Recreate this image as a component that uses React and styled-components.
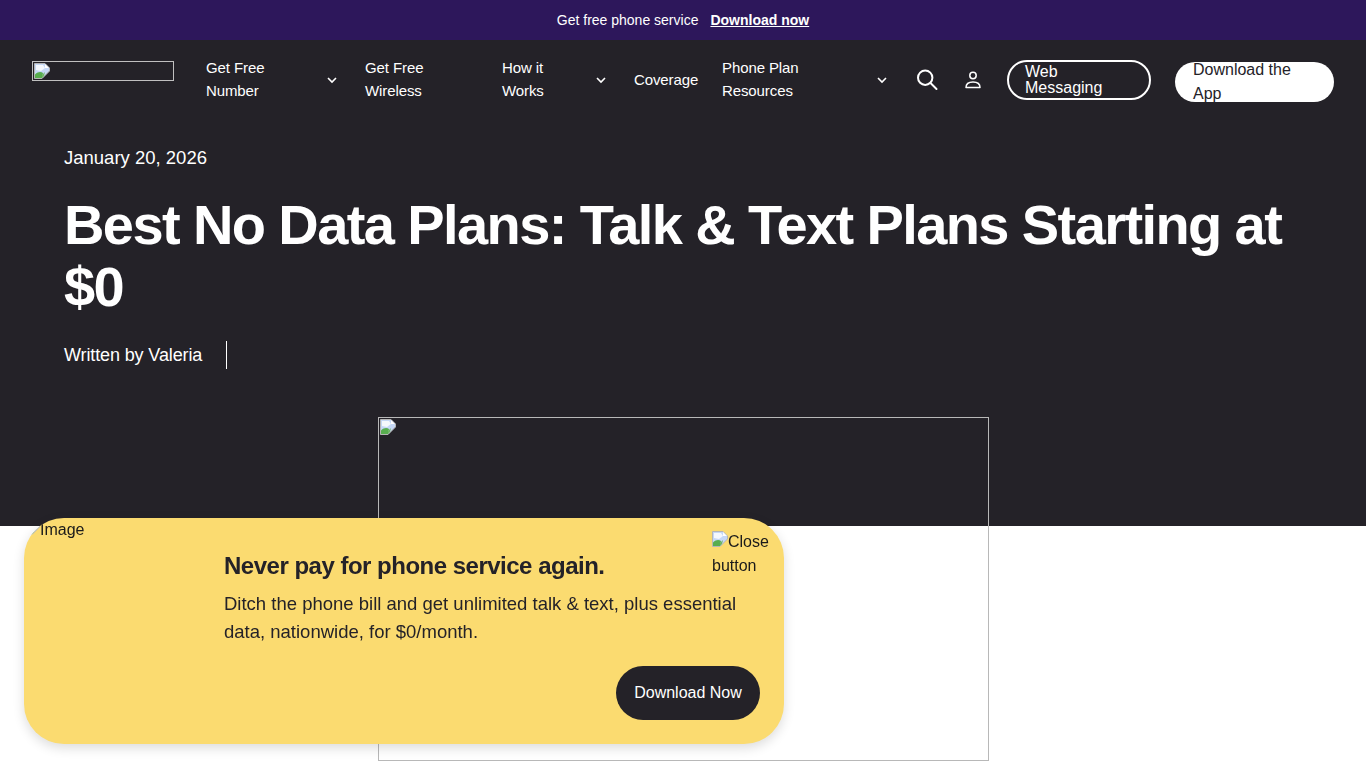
import React from 'react';
import styled, { createGlobalStyle } from 'styled-components';

const GlobalStyle = createGlobalStyle`
  body {
    margin: 0;
    background: #ffffff;
    font-family: "Liberation Sans", Arial, sans-serif;
    color: #242228;
  }
`;

const PromoBar = styled.div`
  display: flex;
  justify-content: center;
  align-items: center;
  gap: 12px;
  height: 40px;
  background: #2d175b;
  color: #ffffff;
  font-size: 14px;
`;

const PromoLink = styled.a`
  color: #ffffff;
  font-weight: 700;
  text-decoration: underline;
`;

const Nav = styled.nav`
  display: flex;
  align-items: center;
  height: 80px;
  padding: 0 32px;
  background: #242228;
  color: #ffffff;
  font-size: 15px;
  line-height: 23px;
  letter-spacing: -0.1px;
`;

const Logo = styled.div`
  box-sizing: border-box;
  flex: none;
  width: 142px;
  height: 20px;
  margin: -18px 32px 0 0;
  padding: 1px;
  border: 1px solid #c0c0c0;
  overflow: hidden;
  line-height: 0;
`;

const NavItem = styled.a`
  box-sizing: border-box;
  display: flex;
  flex: none;
  align-items: center;
  justify-content: space-between;
  width: ${(p) => p.$width}px;
  margin-right: 24px;
  padding-right: ${(p) => (p.$chevron ? 3 : 0)}px;
`;

const NavLabel = styled.span`
  display: block;
  width: ${(p) => p.$width || 'auto'};
  margin-top: -2px;
`;

const IconSlot = styled.span`
  display: flex;
  flex: none;
  justify-content: center;
  width: ${(p) => p.$width}px;
  margin-right: ${(p) => p.$gap}px;
`;

const WebButton = styled.a`
  box-sizing: border-box;
  flex: none;
  display: flex;
  align-items: center;
  width: 144px;
  height: 40px;
  margin-right: 24px;
  padding: 0 16px;
  border: 2px solid #ffffff;
  border-radius: 20px;
  font-size: 16px;
  line-height: 16px;
  letter-spacing: 0;
`;

const AppButton = styled.a`
  box-sizing: border-box;
  flex: none;
  display: flex;
  align-items: center;
  width: 159px;
  height: 40px;
  margin-top: 4px;
  padding: 0 18px;
  overflow: hidden;
  border-radius: 20px;
  background: #ffffff;
  color: #242228;
  font-size: 16px;
  line-height: 24px;
  letter-spacing: 0;
`;

const Hero = styled.header`
  box-sizing: border-box;
  height: 406px;
  padding: 24px 64px 0;
  background: #242228;
  color: #ffffff;
`;

const DateLine = styled.div`
  font-size: 18.5px;
  line-height: 28px;
`;

const Title = styled.h1`
  margin: 22px 0 0;
  font-size: 56px;
  line-height: 62px;
  font-weight: 700;
  letter-spacing: -1.6px;
`;

const Byline = styled.div`
  display: flex;
  align-items: center;
  height: 28px;
  margin-top: 23px;
  font-size: 18px;
  letter-spacing: -0.12px;
`;

const Divider = styled.span`
  width: 1px;
  height: 28px;
  margin-left: 24px;
  background: #ffffff;
`;

const FeatureImage = styled.div`
  box-sizing: border-box;
  width: 611px;
  height: 344px;
  margin: -109px auto 0;
  padding: 1px;
  border: 1px solid #b8b8b8;
  line-height: 0;
`;

const Popup = styled.aside`
  position: fixed;
  left: 24px;
  top: 518px;
  display: flex;
  box-sizing: border-box;
  width: 760px;
  height: 226px;
  border-radius: 40px;
  overflow: hidden;
  background: #fbdb70;
  box-shadow: 0 4px 12px rgba(0, 0, 0, 0.14);
`;

const PopupMedia = styled.div`
  flex: none;
  width: 200px;
  color: #1a1a1a;
  font-size: 16px;
  line-height: 24px;
`;

const PopupBody = styled.div`
  position: relative;
  flex: 1;
  padding: 32px 24px 24px 0;
`;

const PopupTitle = styled.h2`
  margin: 0;
  font-size: 24px;
  line-height: 32px;
  font-weight: 700;
  letter-spacing: -0.5px;
  color: #242228;
`;

const PopupText = styled.p`
  margin: 8px 0 0;
  font-size: 18.5px;
  line-height: 28px;
  color: #242228;
`;

const CloseAlt = styled.div`
  position: absolute;
  top: 12px;
  right: 12px;
  width: 60px;
  color: #1a1a1a;
  font-size: 16px;
  line-height: 24px;
`;

const DownloadButton = styled.a`
  position: absolute;
  right: 24px;
  bottom: 24px;
  display: flex;
  align-items: center;
  justify-content: center;
  width: 144px;
  height: 54px;
  border-radius: 27px;
  background: #242228;
  color: #ffffff;
  font-size: 16px;
`;

const BrokenImage = () => (
  <svg width="16" height="16" viewBox="0 0 16 16">
    <path d="M0.500 0.500H11L15.500 5V8L8 15.500H0.500z" fill="#c6d8f6" stroke="#b5b5b5" strokeWidth="1" />
    <path d="M2 2h7l2 3-4 3-5-1z" fill="#f5f8fd" />
    <path d="M1 15v-3.500c3-3 6-3 8-1.500l-1 5z" fill="#58ad4f" />
    <path d="M8 12l3-3-1 4-2 2z" fill="#6fb564" />
    <path d="M11 1v4h4z" fill="#ffffff" />
  </svg>
);

const Chevron = () => (
  <svg width="12" height="12" viewBox="0 0 12 12" fill="none" stroke="#ffffff" strokeWidth="1.6">
    <path d="M2 4l4 4 4-4" />
  </svg>
);

const SearchIcon = () => (
  <svg width="22" height="22" viewBox="0 0 22 22" fill="none" stroke="#ffffff" strokeWidth="2">
    <circle cx="9.200" cy="8.700" r="7.200" />
    <path d="M14.500 14l6 6" strokeLinecap="round" />
  </svg>
);

const UserIcon = () => (
  <svg width="16" height="18" viewBox="0 0 16 18" fill="none" stroke="#ffffff" strokeWidth="1.500">
    <circle cx="8" cy="4.500" r="3.200" />
    <path d="M1 16.500c0-4 2.500-5.500 7-5.500s7 1.500 7 5.500z" strokeLinejoin="round" />
  </svg>
);

const App = () => (
  <>
    <GlobalStyle />
    <PromoBar>
      <span>Get free phone service</span>
      <PromoLink>Download now</PromoLink>
    </PromoBar>
    <Nav>
      <Logo>
        <BrokenImage />
      </Logo>
      <NavItem $width={135} $chevron>
        <NavLabel $width="60px">Get Free Number</NavLabel>
        <Chevron />
      </NavItem>
      <NavItem $width={113}>
        <NavLabel $width="60px">Get Free Wireless</NavLabel>
      </NavItem>
      <NavItem $width={108} $chevron>
        <NavLabel $width="60px">How it Works</NavLabel>
        <Chevron />
      </NavItem>
      <NavItem $width={64}>
        <NavLabel>Coverage</NavLabel>
      </NavItem>
      <NavItem $width={169} $chevron>
        <NavLabel $width="90px">Phone Plan Resources</NavLabel>
        <Chevron />
      </NavItem>
      <IconSlot $width={24} $gap={24}>
        <SearchIcon />
      </IconSlot>
      <IconSlot $width={20} $gap={24}>
        <UserIcon />
      </IconSlot>
      <WebButton>Web Messaging</WebButton>
      <AppButton>Download the App</AppButton>
    </Nav>
    <Hero>
      <DateLine>January 20, 2026</DateLine>
      <Title>Best No Data Plans: Talk &amp; Text Plans Starting at $0</Title>
      <Byline>
        Written by Valeria
        <Divider />
      </Byline>
    </Hero>
    <FeatureImage>
      <BrokenImage />
    </FeatureImage>
    <Popup>
      <PopupMedia>
        <BrokenImage />
        Image
      </PopupMedia>
      <PopupBody>
        <PopupTitle>Never pay for phone service again.</PopupTitle>
        <PopupText>
          Ditch the phone bill and get unlimited talk &amp; text, plus essential data, nationwide,
          for $0/month.
        </PopupText>
        <CloseAlt>
          <BrokenImage />
          Close button
        </CloseAlt>
        <DownloadButton>Download Now</DownloadButton>
      </PopupBody>
    </Popup>
  </>
);

export default App;
